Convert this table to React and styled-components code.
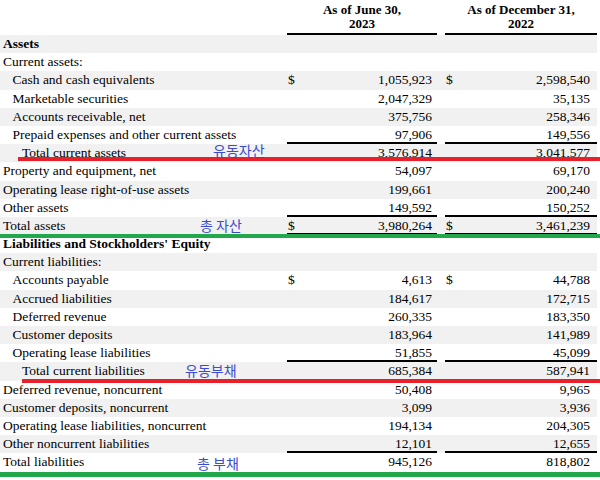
import React from "react";
import styled, { createGlobalStyle } from "styled-components";

const GlobalStyle = createGlobalStyle`
  body {
    margin: 0;
    background: #fff;
  }
`;

const rows = [
  { label: "Assets", bold: true },
  { label: "Current assets:" },
  { label: "Cash and cash equivalents", indent: 1, a: "1,055,923", b: "2,598,540", dollar: true },
  { label: "Marketable securities", indent: 1, a: "2,047,329", b: "35,135" },
  { label: "Accounts receivable, net", indent: 1, a: "375,756", b: "258,346" },
  { label: "Prepaid expenses and other current assets", indent: 1, a: "97,906", b: "149,556", rule: true },
  { label: "Total current assets", indent: 2, a: "3,576,914", b: "3,041,577" },
  { label: "Property and equipment, net", a: "54,097", b: "69,170" },
  { label: "Operating lease right-of-use assets", a: "199,661", b: "200,240" },
  { label: "Other assets", a: "149,592", b: "150,252", rule: true },
  { label: "Total assets", a: "3,980,264", b: "3,461,239", dollar: true, rule: true },
  { label: "Liabilities and Stockholders' Equity", bold: true },
  { label: "Current liabilities:" },
  { label: "Accounts payable", indent: 1, a: "4,613", b: "44,788", dollar: true },
  { label: "Accrued liabilities", indent: 1, a: "184,617", b: "172,715" },
  { label: "Deferred revenue", indent: 1, a: "260,335", b: "183,350" },
  { label: "Customer deposits", indent: 1, a: "183,964", b: "141,989" },
  { label: "Operating lease liabilities", indent: 1, a: "51,855", b: "45,099", rule: true },
  { label: "Total current liabilities", indent: 2, a: "685,384", b: "587,941" },
  { label: "Deferred revenue, noncurrent", a: "50,408", b: "9,965" },
  { label: "Customer deposits, noncurrent", a: "3,099", b: "3,936" },
  { label: "Operating lease liabilities, noncurrent", a: "194,134", b: "204,305" },
  { label: "Other noncurrent liabilities", a: "12,101", b: "12,655", rule: true },
  { label: "Total liabilities", a: "945,126", b: "818,802" },
];

// korean notes written over the statement
const notes = [
  { text: "유동자산", left: 213, top: 140 },
  { text: "총 자산", left: 200, top: 215 },
  { text: "유동부채", left: 185, top: 360 },
  { text: "총 부채", left: 197, top: 453 },
];

const marks = [
  { color: "#e8202a", left: 18, top: 157, height: 4 },
  { color: "#22a84a", left: 0, top: 234, height: 4 },
  { color: "#e8202a", left: 22, top: 379, height: 4 },
  { color: "#22a84a", left: 0, top: 472, height: 5 },
];

function App() {
  return (
    <>
      <GlobalStyle />
      <Sheet>
        <HeaderRow>
          <span />
          <HeadCell>
            <div>As of June 30,</div>
            <div>2023</div>
          </HeadCell>
          <span />
          <HeadCell>
            <div>As of December 31,</div>
            <div>2022</div>
          </HeadCell>
        </HeaderRow>
        <Body>
          {rows.map((r) => (
            <Row key={r.label}>
              <Label $indent={r.indent || 0} $bold={r.bold}>
                {r.label}
              </Label>
              <Value $rule={r.rule} $pad={5}>
                <span>{r.dollar ? "$" : ""}</span>
                <span>{r.a}</span>
              </Value>
              <span />
              <Value $rule={r.rule} $pad={7}>
                <span>{r.dollar ? "$" : ""}</span>
                <span>{r.b}</span>
              </Value>
            </Row>
          ))}
        </Body>
        {marks.map((m) => (
          <Mark
            key={m.top}
            $color={m.color}
            style={{ left: m.left, top: m.top, height: m.height }}
          />
        ))}
        {notes.map((n) => (
          <Note key={n.text} style={{ left: n.left, top: n.top }}>
            {n.text}
          </Note>
        ))}
      </Sheet>
    </>
  );
}

const Sheet = styled.div`
  position: relative;
  width: 600px;
  height: 480px;
  overflow: hidden;
  font-family: "Liberation Serif", "Times New Roman", serif;
  font-size: 13.5px;
  color: #000;
`;

const HeaderRow = styled.div`
  display: grid;
  grid-template-columns: 287px 150px 8px 152px;
  height: 35px;
`;

const HeadCell = styled.div`
  align-self: end;
  text-align: center;
  font-weight: bold;
  font-size: 13px;
  line-height: 13.5px;
  padding-bottom: 3px;
  border-bottom: 2px solid #000;
`;

const Body = styled.div`
  width: 597px;
`;

const Row = styled.div`
  display: grid;
  grid-template-columns: 287px 150px 8px 152px;
  height: 18.2px;
  line-height: 18px;

  &:nth-child(odd) {
    background: #f1f1f1;
  }
`;

const Label = styled.div`
  padding-left: ${({ $indent }) => 3 + $indent * 9.5}px;
  font-weight: ${({ $bold }) => ($bold ? "bold" : "normal")};
  white-space: nowrap;
`;

const Value = styled.div`
  display: flex;
  justify-content: space-between;
  padding: 0 ${({ $pad }) => $pad}px 0 1px;
  box-shadow: ${({ $rule }) => ($rule ? "inset 0 -2px 0 #000" : "none")};
`;

const Mark = styled.div`
  position: absolute;
  right: 0;
  background: ${({ $color }) => $color};
`;

const Note = styled.div`
  position: absolute;
  font-family: "Noto Sans CJK KR", "Noto Sans", sans-serif;
  font-size: 14px;
  line-height: 20px;
  color: #3b4ccc;
  white-space: nowrap;
`;

export default App;
